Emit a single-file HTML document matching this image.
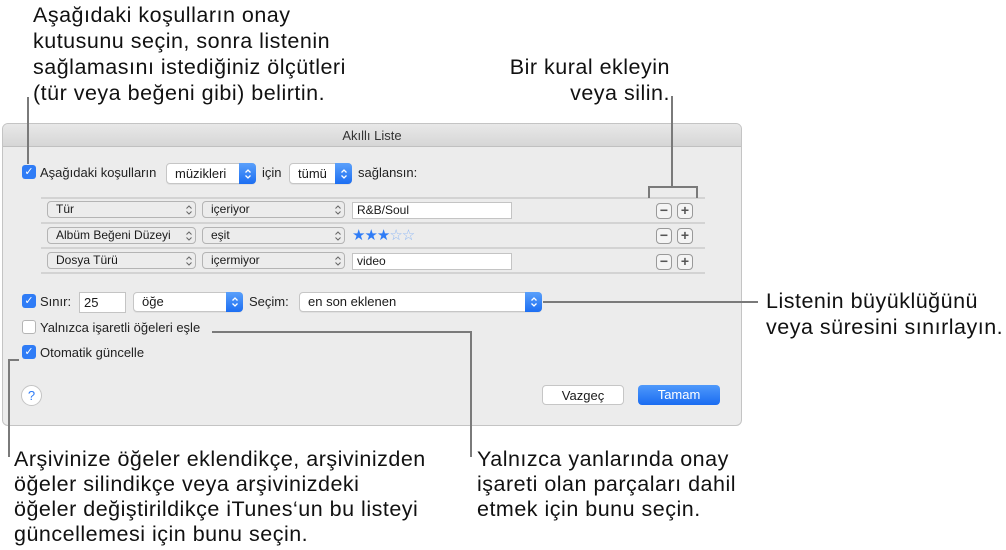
<!DOCTYPE html>
<html><head><meta charset="utf-8"><style>
*{margin:0;padding:0;box-sizing:border-box}
body{width:1006px;height:550px;background:#fff;position:relative;overflow:hidden;font-family:"Liberation Sans",sans-serif;color:#1a1a1a}
.a{position:absolute}
.cap{font-size:21.5px;line-height:26px;color:#111;white-space:nowrap;letter-spacing:0.5px}
.ln{position:absolute;background:#7a7a7a}
.win{left:2px;top:123px;width:740px;height:303px;background:#ececec;border:1px solid #c4c4c4;border-radius:6px;overflow:hidden}
.title{left:0;top:0;width:100%;height:23px;background:linear-gradient(#e8e8e8,#d6d6d6);border-bottom:1px solid #c0c0c0;text-align:center;font-size:13px;line-height:23px;color:#333}
.t{font-size:13px;position:absolute;white-space:nowrap;color:#222}
.cb{position:absolute;width:14px;height:14px;border-radius:3px;background:#2f7cf6;color:#fff;font-size:11px;line-height:14px;text-align:center}
.cb.off{background:#fff;border:1px solid #b5b5b5}
.pop{position:absolute;background:#fff;border:1px solid #c6c6c6;border-radius:4px;font-size:13px;padding-left:8px;white-space:nowrap;box-shadow:0 1px 0 rgba(0,0,0,.05)}
.pop .ar{position:absolute;right:-1px;top:-1px;bottom:-1px;width:17px;background:linear-gradient(#5aa0fb,#1c6ef2);border-radius:0 4px 4px 0}
.ar svg,.sp svg{position:absolute;left:50%;top:50%;transform:translate(-50%,-50%)}
.sp{position:absolute;background:#ececec;border:1px solid #b4b4b4;border-radius:4px;font-size:12px;padding-left:8px;line-height:15px;white-space:nowrap}
.sp svg{left:auto;right:2px;transform:translateY(-50%)}
.fld{position:absolute;background:#fff;border:1px solid #c4c4c4;font-size:12px;padding-left:4px;white-space:nowrap}
.pm{position:absolute;width:16px;height:16px;border:1px solid #999;border-radius:4px;background:#f4f4f4;font-size:14px;line-height:13px;text-align:center;color:#555;font-weight:bold}
.sep{position:absolute;left:38px;width:664px;height:2px;background:#d3d3d3}
.btn{position:absolute;width:82px;height:20px;border-radius:4px;font-size:13px;text-align:center;line-height:19px}
</style></head><body>
<div class="a cap" style="left:33px;top:2px">Aşağıdaki koşulların onay<br>kutusunu seçin, sonra listenin<br>sağlamasını istediğiniz ölçütleri<br>(tür veya beğeni gibi) belirtin.</div>
<div class="a cap" style="left:420px;top:54px;width:250px;text-align:right">Bir kural ekleyin<br>veya silin.</div>
<div class="a cap" style="left:766px;top:288px">Listenin büyüklüğünü<br>veya süresini sınırlayın.</div>
<div class="a cap" style="left:14px;top:447px;line-height:25px">Arşivinize öğeler eklendikçe, arşivinizden<br>öğeler silindikçe veya arşivinizdeki<br>öğeler değiştirildikçe iTunes‘un bu listeyi<br>güncellemesi için bunu seçin.</div>
<div class="a cap" style="left:477px;top:447px;line-height:25px">Yalnızca yanlarında onay<br>işareti olan parçaları dahil<br>etmek için bunu seçin.</div>

<div class="a win">
 <div class="a title">Akıllı Liste</div>
 <div class="cb" style="left:19px;top:41px">✓</div>
 <div class="t" style="left:37px;top:41px">Aşağıdaki koşulların</div>
 <div class="pop" style="left:163px;top:39px;width:90px;height:21px;line-height:19px">müzikleri<span class="ar"><svg width="8" height="12"><path d="M1.5 4.5L4 2l2.5 2.5M1.5 7.5L4 10l2.5-2.5" stroke="#fff" stroke-width="1.3" fill="none"/></svg></span></div>
 <div class="t" style="left:259px;top:41px">için</div>
 <div class="pop" style="left:286px;top:39px;width:63px;height:21px;line-height:19px">tümü<span class="ar"><svg width="8" height="12"><path d="M1.5 4.5L4 2l2.5 2.5M1.5 7.5L4 10l2.5-2.5" stroke="#fff" stroke-width="1.3" fill="none"/></svg></span></div>
 <div class="t" style="left:355px;top:41px">sağlansın:</div>

 <div class="sep" style="top:73px"></div>
 <div class="sp" style="left:44px;top:77px;width:149px;height:17px">Tür<svg width="8" height="12"><path d="M1.5 4.5L4 2l2.5 2.5M1.5 7.5L4 10l2.5-2.5" stroke="#666" stroke-width="1" fill="none"/></svg></div>
 <div class="sp" style="left:199px;top:77px;width:143px;height:17px">içeriyor<svg width="8" height="12"><path d="M1.5 4.5L4 2l2.5 2.5M1.5 7.5L4 10l2.5-2.5" stroke="#666" stroke-width="1" fill="none"/></svg></div>
 <div class="fld" style="left:349px;top:78px;width:160px;height:17px;line-height:15px">R&amp;B/Soul</div>
 <div class="pm" style="left:653px;top:79px">−</div><div class="pm" style="left:674px;top:79px">+</div>
 <div class="sep" style="top:98px"></div>
 <div class="sp" style="left:44px;top:103px;width:149px;height:17px">Albüm Beğeni Düzeyi<svg width="8" height="12"><path d="M1.5 4.5L4 2l2.5 2.5M1.5 7.5L4 10l2.5-2.5" stroke="#666" stroke-width="1" fill="none"/></svg></div>
 <div class="sp" style="left:199px;top:103px;width:143px;height:17px">eşit<svg width="8" height="12"><path d="M1.5 4.5L4 2l2.5 2.5M1.5 7.5L4 10l2.5-2.5" stroke="#666" stroke-width="1" fill="none"/></svg></div>
 <div class="t" style="left:349px;top:102px;color:#2f7cf6;font-size:15px;letter-spacing:-1px">★★★<span style="color:#8fb8f5">☆☆</span></div>
 <div class="pm" style="left:653px;top:104px">−</div><div class="pm" style="left:674px;top:104px">+</div>
 <div class="sep" style="top:123px"></div>
 <div class="sp" style="left:44px;top:128px;width:149px;height:17px">Dosya Türü<svg width="8" height="12"><path d="M1.5 4.5L4 2l2.5 2.5M1.5 7.5L4 10l2.5-2.5" stroke="#666" stroke-width="1" fill="none"/></svg></div>
 <div class="sp" style="left:199px;top:128px;width:143px;height:17px">içermiyor<svg width="8" height="12"><path d="M1.5 4.5L4 2l2.5 2.5M1.5 7.5L4 10l2.5-2.5" stroke="#666" stroke-width="1" fill="none"/></svg></div>
 <div class="fld" style="left:349px;top:129px;width:160px;height:17px;line-height:15px">video</div>
 <div class="pm" style="left:653px;top:130px">−</div><div class="pm" style="left:674px;top:130px">+</div>
 <div class="sep" style="top:148px"></div>

 <div class="cb" style="left:19px;top:170px">✓</div>
 <div class="t" style="left:37px;top:170px">Sınır:</div>
 <div class="fld" style="left:76px;top:168px;width:47px;height:21px;line-height:19px;font-size:13px">25</div>
 <div class="pop" style="left:130px;top:168px;width:110px;height:20px;line-height:18px">öğe<span class="ar"><svg width="8" height="12"><path d="M1.5 4.5L4 2l2.5 2.5M1.5 7.5L4 10l2.5-2.5" stroke="#fff" stroke-width="1.3" fill="none"/></svg></span></div>
 <div class="t" style="left:246px;top:170px">Seçim:</div>
 <div class="pop" style="left:296px;top:168px;width:243px;height:20px;line-height:18px">en son eklenen<span class="ar"><svg width="8" height="12"><path d="M1.5 4.5L4 2l2.5 2.5M1.5 7.5L4 10l2.5-2.5" stroke="#fff" stroke-width="1.3" fill="none"/></svg></span></div>
 <div class="cb off" style="left:19px;top:196px"></div>
 <div class="t" style="left:37px;top:196px">Yalnızca işaretli öğeleri eşle</div>
 <div class="cb" style="left:19px;top:221px">✓</div>
 <div class="t" style="left:37px;top:221px">Otomatik güncelle</div>
 <div class="a" style="left:18px;top:261px;width:21px;height:21px;border-radius:50%;background:#fff;border:1px solid #c4c4c4;color:#2f7cf6;font-size:13px;text-align:center;line-height:19px">?</div>
 <div class="btn" style="left:539px;top:261px;background:#fff;border:1px solid #c6c6c6">Vazgeç</div>
 <div class="btn" style="left:635px;top:261px;background:linear-gradient(#4f99fb,#1a6cf1);color:#fff">Tamam</div>
</div>

<div class="ln" style="left:27px;top:97px;width:2px;height:67px"></div>
<div class="ln" style="left:671px;top:96px;width:2px;height:91px"></div>
<div class="ln" style="left:648px;top:186px;width:50px;height:2px"></div>
<div class="ln" style="left:648px;top:186px;width:2px;height:12px"></div>
<div class="ln" style="left:696px;top:186px;width:2px;height:12px"></div>
<div class="ln" style="left:543px;top:301px;width:215px;height:2px"></div>
<div class="ln" style="left:212px;top:331px;width:259px;height:2px"></div>
<div class="ln" style="left:470px;top:331px;width:2px;height:126px"></div>
<div class="ln" style="left:8px;top:359px;width:11px;height:2px"></div>
<div class="ln" style="left:8px;top:359px;width:2px;height:98px"></div>
</body></html>
